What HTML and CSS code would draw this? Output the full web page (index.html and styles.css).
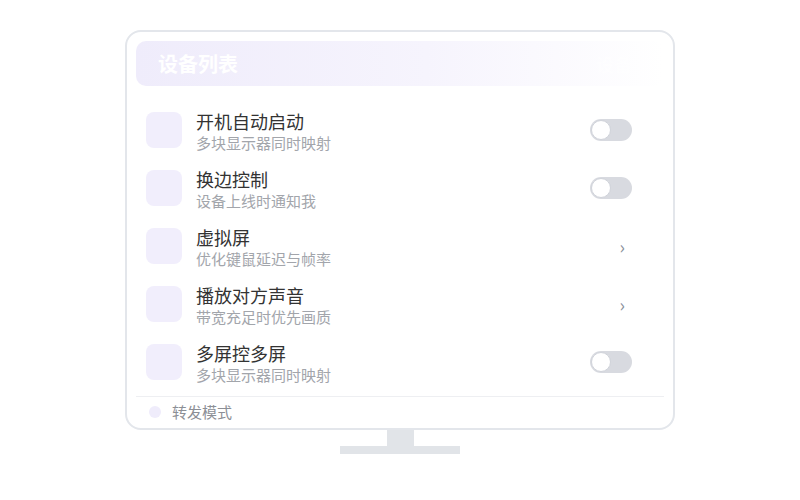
FILE: index.html
```html
<!DOCTYPE html>
<html>

<head>
    <link rel="stylesheet" href="styles.css">
</head>

<body>

    <div class="screen">

        <header class="title-bar">
            <h1>设备列表</h1>
            <span class="ghost">设备</span>
        </header>

        <ul class="settings">
            <li class="row">
                <div class="icon"></div>
                <div class="text">
                    <div class="name">开机自动启动</div>
                    <div class="desc">多块显示器同时映射</div>
                </div>
                <div class="control"><span class="toggle"></span></div>
            </li>
            <li class="row">
                <div class="icon"></div>
                <div class="text">
                    <div class="name">换边控制</div>
                    <div class="desc">设备上线时通知我</div>
                </div>
                <div class="control"><span class="toggle"></span></div>
            </li>
            <li class="row">
                <div class="icon"></div>
                <div class="text">
                    <div class="name">虚拟屏</div>
                    <div class="desc">优化键鼠延迟与帧率</div>
                </div>
                <div class="control"><span class="chevron">›</span></div>
            </li>
            <li class="row">
                <div class="icon"></div>
                <div class="text">
                    <div class="name">播放对方声音</div>
                    <div class="desc">带宽充足时优先画质</div>
                </div>
                <div class="control"><span class="chevron">›</span></div>
            </li>
            <li class="row">
                <div class="icon"></div>
                <div class="text">
                    <div class="name">多屏控多屏</div>
                    <div class="desc">多块显示器同时映射</div>
                </div>
                <div class="control"><span class="toggle"></span></div>
            </li>
        </ul>

        <footer class="mode">
            <span class="dot"></span>
            <span>转发模式</span>
        </footer>

    </div>

    <div class="neck"></div>
    <div class="base"></div>

</body>

</html>
```

FILE: styles.css
```css
body {
    margin: 0;
    padding-top: 30px;
    background-color: #ffffff;
    font-family: "Noto Sans CJK SC", "Noto Sans", sans-serif;
    display: flex;
    flex-direction: column;
    align-items: center;
}

.screen {
    width: 528px;
    height: 378px;
    padding: 9px;
    border: 2px solid #e3e6eb;
    border-radius: 16px;
    background-color: #ffffff;
    display: flex;
    flex-direction: column;
    flex-shrink: 0;
}

.title-bar {
    height: 45px;
    flex-shrink: 0;
    border-radius: 10px;
    background: linear-gradient(90deg, #efecfb 0%, #f6f4fd 55%, rgba(255, 255, 255, 0) 100%);
    display: flex;
    align-items: center;
    justify-content: space-between;
    padding: 0 22px;
}

.title-bar h1 {
    margin: 0;
    font-size: 20px;
    font-weight: 700;
    color: #ffffff;
    line-height: 1;
}

.ghost {
    font-size: 18px;
    font-weight: 700;
    color: rgba(255, 255, 255, 0.5);
    margin-right: 10px;
}

.settings {
    list-style-type: none;
    margin: 15px 0 0 0;
    padding: 0;
    flex-shrink: 0;
}

.row {
    height: 58px;
    display: flex;
    align-items: center;
    padding: 0 32px 0 10px;
}

.icon {
    width: 36px;
    height: 36px;
    border-radius: 8px;
    background-color: #f1eefc;
    flex-shrink: 0;
}

.text {
    flex: 1;
    margin-left: 14px;
    padding-top: 4px;
    display: flex;
    flex-direction: column;
}

.name {
    font-size: 18px;
    color: #333333;
    line-height: 22px;
}

.desc {
    font-size: 15px;
    color: #a2a5ab;
    line-height: 22px;
}

.control {
    width: 42px;
    display: flex;
    justify-content: flex-end;
}

.toggle {
    width: 42px;
    height: 22px;
    border-radius: 11px;
    background-color: #d8dae0;
    position: relative;
    box-sizing: border-box;
}

.toggle::after {
    content: "";
    position: absolute;
    left: 1px;
    top: 1px;
    width: 20px;
    height: 20px;
    border-radius: 50%;
    background-color: #ffffff;
    box-sizing: border-box;
    border: 1px solid #d0d3da;
}

.chevron {
    font-size: 18px;
    color: #8a8f99;
    margin-right: 7px;
    line-height: 1;
}

.mode {
    margin-top: 5px;
    border-top: 1px solid #eeeff2;
    height: 31px;
    display: flex;
    align-items: center;
    padding: 4px 0 0 13px;
    font-size: 15px;
    color: #8c8f96;
}

.dot {
    width: 12px;
    height: 12px;
    border-radius: 50%;
    background-color: #efecfb;
    margin-right: 11px;
}

.neck {
    width: 27px;
    height: 16px;
    background-color: #e1e4e8;
}

.base {
    width: 120px;
    height: 8px;
    background-color: #e1e4e8;
}
```
